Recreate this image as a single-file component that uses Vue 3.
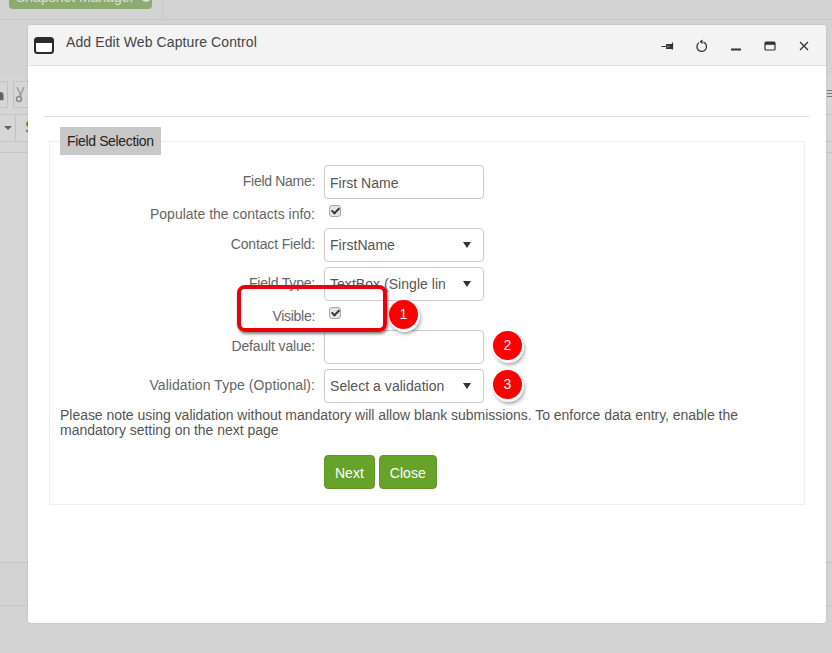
<script setup>
const rows = [
  { id: 'name', label: 'Field Name:', kind: 'input', value: 'First Name' },
  { id: 'populate', label: 'Populate the contacts info:', kind: 'check' },
  { id: 'contact', label: 'Contact Field:', kind: 'picker', value: 'FirstName' },
  { id: 'type', label: 'Field Type:', kind: 'picker', value: 'TextBox (Single line)' },
  { id: 'visible', label: 'Visible:', kind: 'check' },
  { id: 'default', label: 'Default value:', kind: 'input', value: '' },
  { id: 'validation', label: 'Validation Type (Optional):', kind: 'picker', value: 'Select a validation' },
]
</script>

<template>
  <div class="page">
    <div class="topbar">
      <div class="topbar-left"><span class="snap">Snapshot Manager <i class="snap-dot"></i></span></div>
    </div>
    <div class="tools one">
      <span class="tool first">
        <svg width="8" height="14" viewBox="0 0 8 14"><path d="M-3 13V7a3.500 3.500 0 0 1 7 0v6z" fill="#5c6670" /></svg>
      </span>
      <span class="tool">
        <svg width="14" height="18" viewBox="0 0 14 18"><path d="M3 1l4 9M10 1L6 10" stroke="#9a9a9a" stroke-width="1.500" fill="none" /><circle cx="5" cy="13" r="2.500" fill="none" stroke="#8a8a8a" stroke-width="1.500" /></svg>
      </span>
      <span class="lines"><i></i><i></i><i></i></span>
    </div>
    <div class="tools two">
      <span class="cell"><b class="caret"></b></span>
      <span class="cell-s">S</span>
    </div>
    <div class="tools three"></div>
    <div class="body-gap"></div>
    <div class="foot"></div>

    <section class="modal">
      <header class="head">
        <svg class="app-icon" width="20" height="17" viewBox="0 0 20 17">
          <rect x="1" y="1" width="18" height="15" rx="2.500" fill="#fff" stroke="#2b2b2b" stroke-width="2" />
          <path d="M1 3.500a2.500 2.500 0 0 1 2.500-2.500h13a2.500 2.500 0 0 1 2.500 2.500V6H1z" fill="#2b2b2b" />
        </svg>
        <h1 class="title">Add Edit Web Capture Control</h1>
        <div class="actions">
          <svg width="14" height="14" viewBox="0 0 14 14"><path d="M0.500 7.500H6" fill="none" stroke="#333" stroke-width="1.200" /><path d="M5 5h6.500v5H5z" fill="#333" /><path d="M5.500 6.500h3v2h-3z" fill="#777" /><path d="M11.500 3.500v7" stroke="#333" stroke-width="1.200" /></svg>
          <svg width="14" height="14" viewBox="0 0 14 14"><path d="M8.500 3.200a4.800 4.800 0 1 1-4.600.6" fill="none" stroke="#333" stroke-width="1.300" /><path d="M7.500 0.500v4.800L4.500 2.500z" fill="#333" /></svg>
          <svg width="14" height="14" viewBox="0 0 14 14"><path d="M2 10.500h10" stroke="#333" stroke-width="1.800" /></svg>
          <svg width="14" height="14" viewBox="0 0 14 14"><rect x="2" y="3" width="10" height="8" rx="1" fill="none" stroke="#333" stroke-width="1.200" /><rect x="2" y="3" width="10" height="2.800" fill="#333" /></svg>
          <svg width="14" height="14" viewBox="0 0 14 14"><path d="M3 3l8 8M11 3l-8 8" stroke="#333" stroke-width="1.300" /></svg>
        </div>
      </header>

      <div class="content">
        <hr class="rule" />
        <div class="fieldset">
          <div class="legend">Field Selection</div>
          <form class="form" @submit.prevent>
            <div v-for="r in rows" :key="r.id" class="row" :class="['kind-' + r.kind, 'row-' + r.id]">
              <label class="label">{{ r.label }}</label>
              <input v-if="r.kind === 'input'" class="control text-control" type="text" :value="r.value" />
              <input v-else-if="r.kind === 'check'" class="checkbox" type="checkbox" checked />
              <div v-else class="control picker">
                <span class="picker-text">{{ r.value }}</span>
                <span class="arrow"></span>
              </div>
            </div>
            <p class="note">Please note using validation without mandatory will allow blank submissions. To enforce data entry, enable the mandatory setting on the next page</p>
            <div class="buttons">
              <button class="btn" type="button">Next</button>
              <button class="btn btn-close" type="button">Close</button>
            </div>
          </form>
        </div>
      </div>
    </section>

    <div class="callout-box"></div>
    <span class="pin p1">1</span>
    <span class="pin p2">2</span>
    <span class="pin p3">3</span>
  </div>
</template>

<style>
html, body { margin: 0; background: #d3d3d3; }
</style>

<style scoped>
.page {
  position: relative;
  width: 832px;
  height: 653px;
  overflow: hidden;
  background: #d3d3d3;
  font-family: "Liberation Sans", Arial, sans-serif;
  font-size: 14px;
  color: #555;
}
.topbar { height: 19px; border-bottom: 1px solid #c6c6c6; }
.topbar-left { box-sizing: border-box; width: 163px; height: 19px; border-right: 1px solid #c6c6c6; position: relative; overflow: hidden; }
.snap {
  position: absolute;
  left: 9px;
  top: -14px;
  width: 143px;
  box-sizing: border-box;
  height: 23px;
  padding-left: 7px;
  line-height: 23px;
  background: #8cab70;
  border-radius: 4px;
  color: #d8e3cd;
  white-space: nowrap;
}
.snap-dot {
  display: inline-block;
  width: 10px;
  height: 10px;
  margin-left: 3px;
  border-radius: 50%;
  background: #d8e3cd;
}
.tools { position: relative; display: flex; align-items: flex-start; background: #d6d6d6; border-bottom: 1px solid #c4c4c4; }
.tools.one { margin-top: 56px; height: 38px; }
.tool {
  box-sizing: border-box;
  display: flex;
  justify-content: center;
  align-items: center;
  width: 16px;
  height: 27px;
  margin: 5px 0 0 5px;
  border: 1px solid #c2c2c2;
  overflow: hidden;
}
.tool.first { width: 8px; margin-left: 0; border-left: 0; justify-content: flex-start; }
.lines { position: absolute; right: 0; top: 14px; display: flex; flex-direction: column; gap: 2px; width: 5px; }
.lines i { display: block; height: 1px; background: #777; }
.tools.two { height: 26px; }
.cell {
  box-sizing: border-box;
  display: flex;
  justify-content: center;
  align-items: center;
  width: 16px;
  height: 26px;
  border-right: 1px solid #c2c2c2;
}
.caret {
  border-left: 4px solid transparent;
  border-right: 4px solid transparent;
  border-top: 4px solid #6d6247;
}
.cell-s { margin-left: 9px; line-height: 26px; color: #7a6a3d; font-size: 16px; }
.tools.three { height: 10px; }
.body-gap { height: 409px; border-bottom: 1px solid #c2c2c2; background: #d6d6d6; }
.foot { height: 42px; border-bottom: 1px solid #c6c6c6; }

.modal {
  position: absolute;
  left: 28px;
  top: 25px;
  width: 798px;
  height: 598px;
  background: #fff;
  border-radius: 3px;
  box-shadow: 0 0 2px rgba(0, 0, 0, 0.15);
  overflow: hidden;
}
.head {
  display: flex;
  align-items: flex-start;
  height: 40px;
  background: #f3f3f3;
  border-bottom: 1px solid #dcdcdc;
}
.app-icon { margin: 12px 0 0 6px; flex: none; }
.title {
  margin: 9px 0 0 12px;
  font-size: 14px;
  font-weight: 400;
  line-height: 17px;
  color: #444;
  letter-spacing: 0.1px;
}
.actions { margin: 14px 15px 0 auto; display: flex; gap: 20px; }
.actions svg { display: block; }

.content { padding: 50px 16px 0; }
.rule { margin: 0; height: 1px; border: 0; background: #e3e3e3; }
.fieldset {
  position: relative;
  margin: 24px 5px 0;
  height: 362px;
  border: 1px solid #eee;
}
.legend {
  position: absolute;
  left: 10px;
  top: -15px;
  width: 101px;
  box-sizing: border-box;
  height: 28px;
  padding-left: 7px;
  line-height: 28px;
  background: #c8c8c8;
  color: #222;
  letter-spacing: -0.35px;
  white-space: nowrap;
}
.form { padding: 23px 10px 0; }
.row { display: grid; grid-template-columns: 255px 160px; column-gap: 9px; align-items: start; }
.label { text-align: right; color: #666; line-height: 17px; padding-top: 8px; }
.row-name .label { letter-spacing: -0.3px; }
.row-contact .label { letter-spacing: -0.15px; }
.row-type .label { letter-spacing: -0.2px; }
.row-visible .label { letter-spacing: -0.3px; }
.row-default .label { letter-spacing: -0.15px; }
.row-validation .label { letter-spacing: 0.07px; }
.kind-check { height: 24px; margin-top: 5px; }
.kind-check .label { padding-top: 2px; }
.kind-picker { margin-top: 5px; }
.row-populate + .row-contact { margin-top: 0; }
.row-visible + .row-default { margin-top: 0; }
.row-default + .row-validation { margin-top: 5px; }
.control {
  box-sizing: border-box;
  width: 160px;
  height: 34px;
  padding: 0 5px;
  border: 1px solid #ccc;
  border-radius: 4px;
  background: #fff;
  font: 14px "Liberation Sans", Arial, sans-serif;
  color: #555;
}
.text-control { padding-top: 2px; }
.picker { display: flex; align-items: center; padding-right: 0; }
.picker-text { width: 115px; overflow: hidden; white-space: nowrap; flex: none; letter-spacing: 0.04px; }
.arrow {
  margin-left: 18px;
  border-left: 4px solid transparent;
  border-right: 4px solid transparent;
  border-top: 6px solid #333;
}
.checkbox {
  position: relative;
  appearance: none;
  box-sizing: border-box;
  width: 12px;
  height: 12px;
  margin: 1px 0 0 5px;
  border: 1px solid #a8a8a8;
  border-radius: 3px;
  background: #e4e4e4;
}
.checkbox::after {
  content: "";
  position: absolute;
  left: 3px;
  top: 0;
  width: 3px;
  height: 6px;
  border-right: 2px solid #333;
  border-bottom: 2px solid #333;
  transform: rotate(45deg);
}
.note { margin: 5px 0 0; line-height: 15px; color: #555; width: 700px; letter-spacing: -0.03px; }
.buttons { display: flex; gap: 4px; margin: 17px 0 0 264px; }
.btn {
  height: 34px;
  padding: 1px 10px 0;
  border: 1px solid #5f9a26;
  border-radius: 4px;
  background: #67a32a;
  color: #fff;
  font: 14px "Liberation Sans", Arial, sans-serif;
}
.btn-close { letter-spacing: 0.05px; }

.callout-box {
  position: absolute;
  left: 237px;
  top: 285px;
  width: 142px;
  height: 39px;
  border: 4px solid #e8000c;
  border-radius: 8px;
  box-shadow: 1px 2px 3px rgba(0, 0, 0, 0.5);
}
.pin {
  position: absolute;
  width: 29px;
  height: 29px;
  line-height: 29px;
  border-radius: 50%;
  text-align: center;
  background: #f00;
  color: #fff;
  font-size: 14px;
  box-shadow: 1px 2px 0 1px #fff, 2px 4px 4px rgba(0, 0, 0, 0.5);
}
.p1 { left: 389px; top: 300px; }
.p2 { left: 493px; top: 331px; }
.p3 { left: 493px; top: 370px; }
</style>
